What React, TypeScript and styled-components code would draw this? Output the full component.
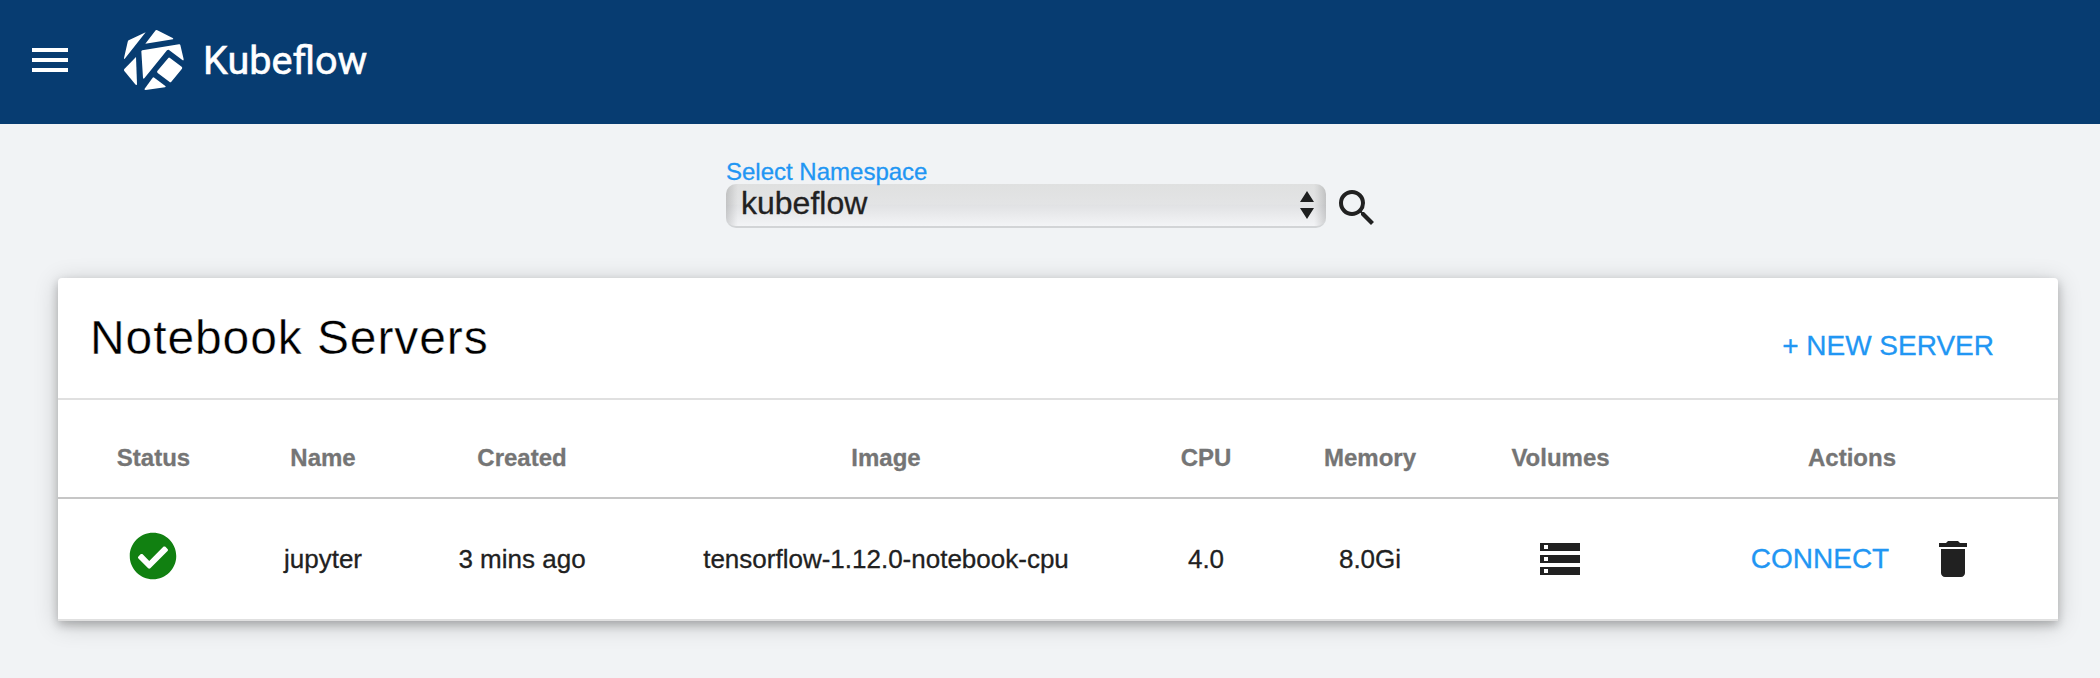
import React from "react";
import styled, { createGlobalStyle } from "styled-components";
import { FaCheckCircle } from "react-icons/fa";
import { MdDelete, MdMenu, MdSearch, MdStorage } from "react-icons/md";

const GlobalStyle = createGlobalStyle`
  * { box-sizing: border-box; }
  body {
    margin: 0;
    min-height: 100vh;
    background: #f1f3f5;
    color: #212121;
    font-family: "Liberation Sans", Arial, sans-serif;
    font-size: 26px;
    -webkit-text-stroke: 0.3px;
  }
  button { font-family: inherit; border: 0; padding: 0; background: none; color: inherit; cursor: pointer; }
`;

const TopBar = styled.header`
  display: flex;
  align-items: center;
  height: 124px;
  padding: 0 26px 4px;
  background: #073c71;
  color: #fff;
`;

const IconButton = styled.button`
  display: flex;
  flex: none;
  font-size: 48px;
`;

const SearchButton = styled(IconButton)`
  margin-bottom: -4px;
`;

const VolumesButton = styled(IconButton)`
  margin-right: 1px;
`;

const Brand = styled.div`
  display: flex;
  align-items: center;
  gap: 19px;
  margin-left: 50px;
`;

const BrandName = styled.span`
  padding-top: 1px;
  font: 400 39.6px/48px Roboto, sans-serif;
  -webkit-text-stroke: 0.6px;
`;

const NamespaceBar = styled.section`
  display: flex;
  align-items: flex-end;
  gap: 7px;
  padding: 36px 0 50px 726px;
`;

const Field = styled.div`
  width: 600px;
`;

const FieldLabel = styled.label`
  display: block;
  font-size: 24px;
  line-height: 24px;
  color: #2196f3;
`;

const SelectBox = styled.div`
  display: flex;
  align-items: center;
  justify-content: space-between;
  height: 44px;
  padding: 0 12px 0 15px;
  border-radius: 10px;
  border-bottom: 2px solid #d2d4d6;
  background:
    linear-gradient(90deg, rgba(0, 0, 0, 0.14), rgba(0, 0, 0, 0.03) 9px, transparent 12px, transparent calc(100% - 12px), rgba(0, 0, 0, 0.03) calc(100% - 9px), rgba(0, 0, 0, 0.14)),
    linear-gradient(#dfe0e0, #e3e4e5 48%, #e1e2e4 50%, #f3f4f6);
`;

const SelectValue = styled.span`
  padding-bottom: 5px;
  font-size: 32px;
  line-height: 36px;
`;

const Card = styled.main`
  width: 2000px;
  margin-left: 58px;
  border-radius: 4px 4px 0 0;
  background: #fff;
  box-shadow: 0 4px 10px rgba(0, 0, 0, 0.22), 0 4px 24px rgba(0, 0, 0, 0.19);
`;

const CardHeader = styled.div`
  display: flex;
  align-items: center;
  justify-content: space-between;
  height: 122px;
  padding: 0 64px 1px 32px;
  border-bottom: 2px solid #e0e0e0;
`;

const Title = styled.h1`
  margin: 0;
  color: #000;
  font-size: 48px;
  font-weight: 400;
  line-height: 56px;
  letter-spacing: 0.9px;
  -webkit-text-stroke: 0.4px #fff;
`;

const LinkButton = styled.button<{ $drop?: number }>`
  margin-top: ${(p) => p.$drop ?? 0}px;
  font-size: 28px;
  line-height: 36px;
  color: #2196f3;
  white-space: nowrap;
`;

const Row = styled.div<{ $head?: boolean }>`
  display: grid;
  grid-template-columns: 191px 148px 250px 478px 162px 166px 215px 368px;
  align-items: center;
  justify-items: center;
  height: ${(p) => (p.$head ? 99 : 122)}px;
  padding-top: ${(p) => (p.$head ? 18 : 0)}px;
  border-bottom: 2px solid ${(p) => (p.$head ? "#c6c6c6" : "#e0e0e0")};
  color: ${(p) => (p.$head ? "#757575" : "#212121")};
  font-size: ${(p) => (p.$head ? 24 : 26)}px;
  font-weight: ${(p) => (p.$head ? 700 : 400)};
`;

const StatusCell = styled.div`
  display: flex;
  padding: 0 1px 6px 0;
  color: #118011;
  font-size: 48px;
`;

const ActionsCell = styled.div`
  display: flex;
  align-items: center;
  gap: 40px;
  padding-left: 24px;
`;

const columns = ["Status", "Name", "Created", "Image", "CPU", "Memory", "Volumes", "Actions"];

const Logo = () => (
  <svg width="60" height="60" viewBox="0 0 180 180" fill="#fff">
    <path d="M65 7 14 31Q12 32 11 36L0 84Q0 90 4 84Z" />
    <path d="M95 1 64 41 147 28Q149 26 146 24L100 1Q97-1 95 1Z" />
    <path d="M52 64Q52 62 55 61L165 43Q168 42 169 45L179 88Q179 93 175 90L135 60Q132 58 129 61L61 145Q58 148 57 143Z" />
    <path d="M36 81 1 117Q-1 120 1 123L35 164Q39 167 39 162Z" />
    <path d="M133 84Q135 81 138 84L173 110Q176 113 174 116L142 155Q139 158 136 155L101 129Q98 126 100 123Z" />
    <path d="M86 143Q88 141 91 143L124 168Q127 171 123 172L65 180Q60 180 62 176Z" />
  </svg>
);

const SelectArrows = () => (
  <svg width="14" height="28" viewBox="0 0 14 28" fill="#1d1f1f">
    <path d="M7 0 14 11H0ZM0 17H14L7 28Z" />
  </svg>
);

export default function App() {
  return (
    <>
      <GlobalStyle />
      <TopBar>
        <IconButton aria-label="Menu"><MdMenu /></IconButton>
        <Brand>
          <Logo />
          <BrandName>Kubeflow</BrandName>
        </Brand>
      </TopBar>
      <NamespaceBar>
        <Field>
          <FieldLabel>Select Namespace</FieldLabel>
          <SelectBox>
            <SelectValue>kubeflow</SelectValue>
            <SelectArrows />
          </SelectBox>
        </Field>
        <SearchButton aria-label="Search"><MdSearch /></SearchButton>
      </NamespaceBar>
      <Card>
        <CardHeader>
          <Title>Notebook Servers</Title>
          <LinkButton $drop={17}>+ NEW SERVER</LinkButton>
        </CardHeader>
        <Row $head>
          {columns.map((name) => <span key={name}>{name}</span>)}
        </Row>
        <Row>
          <StatusCell><FaCheckCircle /></StatusCell>
          <span>jupyter</span>
          <span>3 mins ago</span>
          <span>tensorflow-1.12.0-notebook-cpu</span>
          <span>4.0</span>
          <span>8.0Gi</span>
          <VolumesButton aria-label="Volumes"><MdStorage /></VolumesButton>
          <ActionsCell>
            <LinkButton>CONNECT</LinkButton>
            <IconButton aria-label="Delete"><MdDelete /></IconButton>
          </ActionsCell>
        </Row>
      </Card>
    </>
  );
}
